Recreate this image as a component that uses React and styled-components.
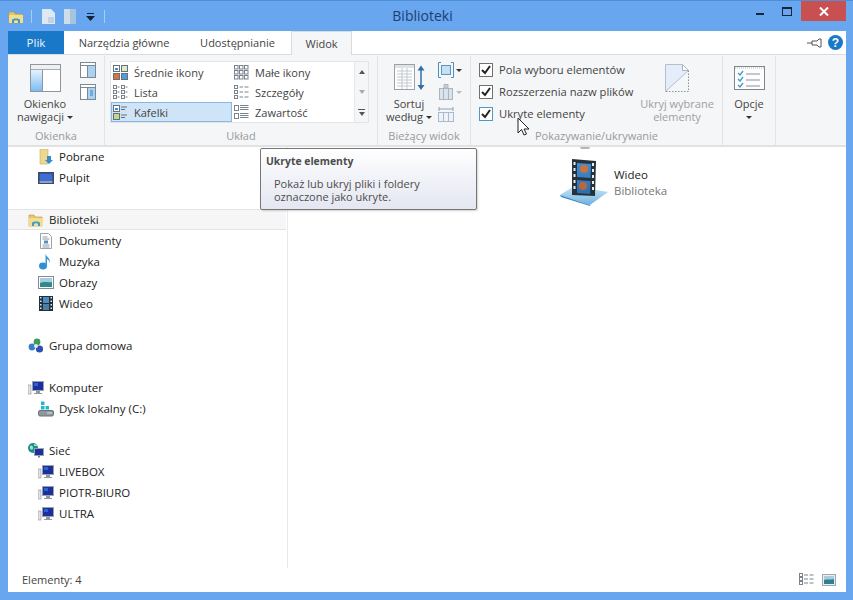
import React from "react";
import styled, { createGlobalStyle } from "styled-components";

const GlobalStyle = createGlobalStyle`
  html, body {
    margin: 0;
    padding: 0;
    background: #68a6ef;
  }
  * {
    box-sizing: border-box;
  }
`;

const Win = styled.div`
  width: 853px;
  height: 600px;
  position: relative;
  overflow: hidden;
  background: #68a6ef;
  border-top: 1px solid #4f8fd8;
  padding: 0 7px 8px 8px;
  display: flex;
  flex-direction: column;
  font-family: "Open Sans", "Noto Sans", sans-serif;
  font-size: 11px;
  color: #333;
`;

const TitleBar = styled.div`
  height: 30px;
  flex: none;
  display: flex;
  align-items: flex-start;
  position: relative;
`;

const QuickBar = styled.div`
  display: flex;
  align-items: center;
  height: 30px;
  padding-top: 1px;
  svg {
    display: block;
  }
`;

const QuickSep = styled.div`
  width: 1px;
  height: 13px;
  background: #a8cdf3;
  margin: 0 ${(p) => p.$r || 10}px 0 ${(p) => p.$l || 7}px;
`;

const QuickIcon = styled.svg`
  margin-left: ${(p) => p.$ml || 0}px;
`;

const Title = styled.div`
  position: absolute;
  left: 0;
  right: 9px;
  top: 5px;
  text-align: center;
  font-size: 14px;
  color: #1c3f6f;
`;

const Controls = styled.div`
  margin-left: auto;
  display: flex;
  align-items: flex-start;
`;

const Ctl = styled.div`
  width: 27px;
  height: 20px;
  display: flex;
  align-items: center;
  justify-content: center;
`;

const Close = styled.div`
  width: 45px;
  height: 20px;
  background: #c85050;
  margin-left: 1px;
  display: flex;
  align-items: center;
  justify-content: center;
`;

const TabBar = styled.div`
  height: 23px;
  flex: none;
  background: #fff;
  display: flex;
  align-items: stretch;
  position: relative;
`;

const FileTab = styled.div`
  width: 56px;
  background: #1a78c9;
  color: #eaf3fb;
  font-size: 11.5px;
  display: flex;
  align-items: center;
  justify-content: center;
`;

const Tab = styled.div`
  width: ${(p) => p.$w}px;
  font-size: 11px;
  color: #444;
  display: flex;
  align-items: center;
  justify-content: center;
  ${(p) =>
    p.$active &&
    `
    background: #f5f6f7;
    border: 1px solid #dadbdc;
    border-bottom: none;
    margin-bottom: -1px;
    z-index: 1;
  `}
`;

const TabRight = styled.div`
  margin-left: auto;
  display: flex;
  align-items: center;
  gap: 5px;
  padding-right: 3px;
`;

const Ribbon = styled.div`
  height: 93px;
  flex: none;
  background: #f5f6f7;
  border-top: 1px solid #dadbdc;
  border-bottom: 2px solid #e1e2e3;
  display: flex;
`;

const Group = styled.div`
  width: ${(p) => p.$w}px;
  flex: none;
  display: flex;
  flex-direction: column;
  border-right: 1px solid #e2e3e4;
  margin-top: 1px;
`;

const GroupBody = styled.div`
  flex: 1;
  display: flex;
  min-height: 0;
`;

const GroupLabel = styled.div`
  height: 16px;
  text-align: center;
  font-size: 11px;
  line-height: 14px;
  color: #9a9a9a;
`;

const BigButton = styled.div`
  width: ${(p) => p.$w}px;
  margin-left: ${(p) => p.$ml || 0}px;
  flex: none;
  display: flex;
  flex-direction: column;
  align-items: center;
  padding-top: ${(p) => p.$pt || 8}px;
  color: ${(p) => (p.$off ? "#a0a0a0" : "#444")};
  font-size: 11px;
  line-height: 13px;
  text-align: center;
  svg {
    display: block;
    flex: none;
  }
`;

const BigText = styled.div`
  position: relative;
  margin-top: ${(p) => p.$mt || 5}px;
  white-space: nowrap;
`;

const Caret = styled.span`
  display: inline-block;
  width: 0;
  height: 0;
  border-left: 3px solid transparent;
  border-right: 3px solid transparent;
  border-top: 3px solid ${(p) => p.$c || "#333"};
  margin-left: ${(p) => p.$ml ?? 3}px;
  vertical-align: 2px;
`;

const SmallStack = styled.div`
  display: flex;
  flex-direction: column;
  gap: 6px;
  margin-left: ${(p) => p.$ml}px;
  padding-top: 6px;
  svg {
    display: block;
  }
`;

const SmallRow = styled.div`
  display: flex;
  align-items: center;
  gap: 2px;
`;

const Gallery = styled.div`
  margin: 5px 0 0 5px;
  width: 259px;
  height: 62px;
  background: #fff;
  border: 1px solid #e2e3e4;
  display: flex;
`;

const GalleryGrid = styled.div`
  display: grid;
  grid-template-columns: 121px 121px;
  grid-auto-flow: column;
  grid-template-rows: repeat(3, 20px);
`;

const GalleryItem = styled.div`
  display: flex;
  align-items: center;
  gap: 6px;
  padding-left: ${(p) => (p.$sel ? "1px" : "2px")};
  font-size: 11px;
  color: #444;
  white-space: nowrap;
  ${(p) =>
    p.$sel &&
    `
    background: #cfe4f7;
    border: 1px solid #86b9e4;
  `}
  svg {
    display: block;
    flex: none;
  }
`;

const GalleryScroll = styled.div`
  margin-left: auto;
  width: 14px;
  border-left: 1px solid #e8e8e8;
  display: grid;
  grid-template-rows: repeat(3, 1fr);
  background: #f5f6f7;
`;

const ScrollCell = styled.div`
  display: flex;
  align-items: center;
  justify-content: center;
  flex-direction: column;
  gap: 2px;
`;

const Arrow = styled.span`
  width: 0;
  height: 0;
  border-left: 3px solid transparent;
  border-right: 3px solid transparent;
  ${(p) =>
    p.$up
      ? `border-bottom: 4px solid ${p.$c || "#555"};`
      : `border-top: 4px solid ${p.$c || "#555"};`}
`;

const ScrollBar = styled.span`
  width: 7px;
  height: 1px;
  background: #555;
`;

const CheckList = styled.div`
  display: flex;
  flex-direction: column;
  gap: 0.5px;
  margin-left: 8px;
  padding-top: 3px;
  width: 158px;
  flex: none;
`;

const CheckRow = styled.div`
  height: 21.5px;
  display: flex;
  align-items: center;
  gap: 6px;
  font-size: 11.2px;
  color: #444;
  white-space: nowrap;
`;

const CheckBox = styled.span`
  width: 14px;
  height: 14px;
  flex: none;
  background: #fff;
  border: 1px solid ${(p) => (p.$hot ? "#4d9ac8" : "#707070")};
  display: flex;
  align-items: center;
  justify-content: center;
`;

const Content = styled.div`
  flex: 1;
  min-height: 0;
  background: #fff;
  display: flex;
  flex-direction: column;
`;

const Panes = styled.div`
  flex: 1;
  min-height: 0;
  display: flex;
`;

const Sidebar = styled.div`
  width: 280px;
  flex: none;
  border-right: 1px solid #e9eaeb;
  overflow: hidden;
`;

const NavList = styled.div`
  margin-top: -1px;
`;

const NavRow = styled.div`
  height: 21px;
  display: flex;
  align-items: center;
  gap: 5px;
  padding-left: ${(p) => (p.$child ? 30 : 20)}px;
  margin-bottom: ${(p) => (p.$last ? 21 : 0)}px;
  font-size: 11.5px;
  color: #222;
  width: 278px;
  ${(p) =>
    p.$hl &&
    `
    background: #f6f6f6;
    box-shadow: inset 0 1px 0 #e4e4e4, inset 0 -1px 0 #e4e4e4;
  `}
`;

const NavIcon = styled.span`
  width: 16px;
  height: 17px;
  flex: none;
  display: flex;
  align-items: center;
  justify-content: center;
  svg {
    display: block;
  }
`;

const Main = styled.div`
  flex: 1;
  position: relative;
  padding: 11px 0 0 272px;
`;

const Tile = styled.div`
  display: flex;
  align-items: flex-start;
  gap: 6px;
  svg {
    display: block;
    flex: none;
  }
`;

const TileText = styled.div`
  padding-top: 9px;
  font-size: 11.5px;
  line-height: 16px;
  color: #222;
  span {
    display: block;
    color: #777;
  }
`;

const ClippedArc = styled.div`
  position: absolute;
  top: 0;
  left: 292px;
  width: 10px;
  height: 2px;
  background: #b5b5b5;
  border-radius: 0 0 5px 5px;
`;

const StatusBar = styled.div`
  height: 24px;
  flex: none;
  display: flex;
  align-items: center;
  padding: 0 10px 1px 14px;
  font-size: 11px;
  color: #444;
`;

const StatusIcons = styled.div`
  margin-left: auto;
  display: flex;
  align-items: center;
  gap: 8px;
  svg {
    display: block;
  }
`;

const Tooltip = styled.div`
  position: absolute;
  left: 260px;
  top: 147px;
  width: 217px;
  height: 62px;
  background: linear-gradient(#ffffff, #e4e6f1);
  border: 1px solid #767676;
  border-radius: 2px;
  box-shadow: 1px 1px 2px rgba(0, 0, 0, 0.18);
  padding: 5px 5px;
  color: #4c4c4c;
  font-size: 11px;
  line-height: 13px;
`;

const TipTitle = styled.div`
  font-weight: 700;
  font-size: 10.4px;
  margin-bottom: 9px;
  margin-top: 1px;
`;

const TipText = styled.div`
  padding-left: 8px;
`;

const Cursor = styled.svg`
  position: absolute;
  left: 517px;
  top: 116px;
`;

const FolderIcon = ({ s = 16 }) => (
  <svg width={s} height={s} viewBox="0 0 16 16">
    <path d="M1 3h5l1 2h7v9H1z" fill="#e8c766" stroke="#b5983f" strokeWidth=".6" />
    <path d="M1 6h14v8H1z" fill="#f4dd8e" />
    <path d="M4 14v-3c0-2 8-2 8 0v3h-2v-2c0-1-4-1-4 0v2z" fill="#3d9fc4" />
  </svg>
);

const DownloadsIcon = () => (
  <svg width="16" height="16" viewBox="0 0 16 16">
    <path d="M2 0h8v15H2z" fill="#ecd88f" stroke="#c6ad58" strokeWidth=".6" />
    <path d="M9 7h4v4h2l-4 4-4-4h2z" fill="#2f8ed0" />
  </svg>
);

const DesktopIcon = () => (
  <svg width="16" height="12" viewBox="0 0 16 12">
    <rect x=".5" y=".5" width="15" height="11" fill="#2c3f6f" stroke="#404a60" />
    <rect x="1.500" y="1.500" width="13" height="8" fill="#3e6fd0" />
    <rect x="1.500" y="9" width="13" height="2" fill="#8aa0c8" />
  </svg>
);

const DocIcon = () => (
  <svg width="16" height="16" viewBox="0 0 16 16">
    <path d="M2.500.5h8l3 3v12h-11z" fill="#fff" stroke="#9aa4ae" />
    <path d="M4.500 4h5M4.500 6h7M4.500 12h7M4.500 14h7" stroke="#8f9aa6" />
    <rect x="6" y="7.500" width="4" height="3" fill="#5d8fb5" />
  </svg>
);

const MusicIcon = () => (
  <svg width="16" height="17" viewBox="0 0 16 17">
    <ellipse cx="5" cy="13" rx="4" ry="3.400" fill="#2d8fd4" />
    <path d="M7.500 13V1c1 3 5 4 4.500 9-.5-2-2-3.500-3-4v7z" fill="#3a9ad9" />
  </svg>
);

const PictureIcon = () => (
  <svg width="16" height="13" viewBox="0 0 16 13">
    <rect x=".5" y=".5" width="15" height="12" fill="#fff" stroke="#7f8b95" />
    <rect x="2" y="2" width="12" height="5" fill="#a8cbe0" />
    <path d="M2 7c4-2 8 0 12-1v5H2z" fill="#2f8a8c" />
  </svg>
);

const FilmIcon = () => (
  <svg width="14" height="15" viewBox="0 0 14 15">
    <rect width="14" height="15" fill="#22303c" />
    <path d="M1 1h1.500v1.500H1zM1 4.500h1.500V6H1zM1 8h1.500v1.500H1zM1 11.500h1.500V13H1zM11.500 1H13v1.500h-1.500zM11.500 4.500H13V6h-1.500zM11.500 8H13v1.500h-1.500zM11.500 11.500H13V13h-1.500z" fill="#dfe7ee" />
    <rect x="4" y="1" width="6" height="6" fill="#4d8cc5" />
    <rect x="4" y="8" width="6" height="6" fill="#4d7fa5" />
  </svg>
);

const HomegroupIcon = () => (
  <svg width="16" height="16" viewBox="0 0 16 16">
    <circle cx="9" cy="4" r="3.400" fill="#3f9c5b" />
    <circle cx="4" cy="9" r="3.400" fill="#3a7dc9" />
    <circle cx="11.500" cy="11" r="3.600" fill="#2e4fae" />
    <circle cx="8" cy="8" r="2" fill="#dfe9f5" />
  </svg>
);

const ComputerIcon = () => (
  <svg width="16" height="14" viewBox="0 0 16 14">
    <rect x="0" y="4" width="3" height="9" fill="#dfe2e6" stroke="#8a9098" strokeWidth=".6" />
    <rect x="4.500" y=".5" width="11" height="9" fill="#1c2f9c" stroke="#9aa3ad" />
    <path d="M6 2h4v3H6z" fill="#2a63d6" />
    <path d="M8 10h4v2h2v1H6v-1h2z" fill="#8f98a3" />
  </svg>
);

const DriveIcon = () => (
  <svg width="16" height="16" viewBox="0 0 16 16">
    <path d="M3 .5h3.500v3.500H3zM3 5h3.500v3.500H3zM7.500 5H11v3.500H7.500z" fill="#22b7cf" />
    <rect x=".5" y="9.500" width="15" height="5.500" rx="1.500" fill="#8e979c" stroke="#6c7478" />
    <path d="M9 12h5" stroke="#dfe5e8" />
  </svg>
);

const NetworkIcon = () => (
  <svg width="16" height="16" viewBox="0 0 16 16">
    <circle cx="5" cy="5" r="5" fill="#1e8f86" />
    <path d="M2 3c2-1 3 0 3 2S2 7 2 5zM6 1c2 0 3 1 3 2H6z" fill="#a7dfd2" />
    <rect x="6.500" y="5.500" width="9" height="7" fill="#1c2f9c" stroke="#9aa3ad" />
    <path d="M10 13h2v1.500h-2z" fill="#77808a" />
  </svg>
);

const PaneIcon = () => (
  <svg width="31" height="28" viewBox="0 0 31 28">
    <defs>
      <linearGradient id="pane" x1="0" y1="0" x2="0" y2="1">
        <stop offset="0" stopColor="#e6f2fc" />
        <stop offset="1" stopColor="#7bbdf2" />
      </linearGradient>
    </defs>
    <rect x=".5" y=".5" width="30" height="27" fill="#fff" stroke="#8f969d" />
    <rect x="1" y="1" width="29" height="4" fill="#eef0f2" />
    <path d="M1 5.500h29" stroke="#a5abb1" />
    <rect x="1" y="6" width="11" height="21" fill="url(#pane)" />
    <path d="M12.500 6v21" stroke="#8f969d" />
  </svg>
);

const SidePaneIcon = ({ lines }) => (
  <svg width="16" height="16" viewBox="0 0 16 16">
    <rect x=".5" y=".5" width="15" height="15" fill="#fff" stroke="#7c8894" />
    <path d="M1 3.500h14M7.500 4v11" stroke="#7c8894" />
    <rect x="8" y="4" width="7" height="11" fill="#a9d2f3" />
    {lines && <path d="M10 7h3M10 9h3M10 11h3" stroke="#3f83bf" />}
  </svg>
);

const ViewIcon = ({ kind }) => {
  if (kind === "medium")
    return (
      <svg width="15" height="15" viewBox="0 0 15 15">
        <rect x=".5" y=".5" width="6" height="6" fill="#fff" stroke="#66707a" />
        <rect x="2" y="3" width="3" height="2" fill="#3d8fc4" />
        <rect x="8.500" y=".5" width="6" height="6" fill="#dfe9c8" stroke="#66707a" />
        <rect x=".5" y="8.500" width="6" height="6" fill="#d8743c" stroke="#66707a" />
        <rect x="8.500" y="8.500" width="6" height="6" fill="#4d9fd9" stroke="#66707a" />
      </svg>
    );
  if (kind === "tiles")
    return (
      <svg width="15" height="15" viewBox="0 0 15 15">
        <rect x=".5" y=".5" width="6" height="6" fill="#fff" stroke="#66707a" />
        <rect x="2" y="3" width="3" height="2" fill="#3d8fc4" />
        <rect x=".5" y="8.500" width="6" height="6" fill="#c5d58a" stroke="#66707a" />
        <path d="M8 2h6M8 4.500h4M8 10h6M8 12.500h4" stroke="#66707a" />
      </svg>
    );
  if (kind === "small") {
    const c = [];
    for (let y = 0; y < 3; y++)
      for (let x = 0; x < 3; x++)
        c.push(<rect key={`${x}${y}`} x={x * 5 + 0.5} y={y * 5 + 0.5} width="3.500" height="3.500" fill="#fff" stroke="#7a838c" />);
    return (
      <svg width="15" height="15" viewBox="0 0 15 15">
        {c}
      </svg>
    );
  }
  if (kind === "list")
    return (
      <svg width="15" height="15" viewBox="0 0 15 15">
        {[0.5, 5.5, 10.5].map((y) => (
          <g key={y}>
            <rect x=".5" y={y} width="3" height="3" fill="#fff" stroke="#7a838c" />
            <path d={`M4.500 ${y + 1.5}h2`} stroke="#7a838c" />
            <rect x="8.500" y={y} width="3" height="3" fill="#fff" stroke="#7a838c" />
            <path d={`M12.500 ${y + 1.5}h2`} stroke="#7a838c" />
          </g>
        ))}
      </svg>
    );
  if (kind === "details")
    return (
      <svg width="15" height="15" viewBox="0 0 15 15">
        {[0.5, 5.5, 10.5].map((y) => (
          <g key={y}>
            <rect x=".5" y={y} width="3" height="3" fill="#fff" stroke="#7a838c" />
            <path d={`M5.500 ${y + 1.5}h3.500M10.500 ${y + 1.5}h4`} stroke="#7a838c" />
          </g>
        ))}
      </svg>
    );
  return (
    <svg width="15" height="15" viewBox="0 0 15 15">
      {[0.5, 8.5].map((y) => (
        <g key={y}>
          <rect x=".5" y={y} width="4" height="5" fill="#fff" stroke="#7a838c" />
          <path d={`M6 ${y}h8.500M6 ${y + 2}h8.500M6 ${y + 4}h8.500`} stroke="#7a838c" />
        </g>
      ))}
    </svg>
  );
};

const SortIcon = () => (
  <svg width="31" height="27" viewBox="0 0 31 27">
    <rect x=".5" y=".5" width="20" height="25" fill="#fff" stroke="#9aa0a6" />
    <rect x="1" y="1" width="19" height="3" fill="#dfe3e7" />
    <path d="M3 7h15M3 10h15M3 13h15M3 16h15M3 19h15M3 22h15M8 4v21M13 4v21" stroke="#c3c8cd" />
    <path d="M27 3v21" stroke="#2f6fa8" strokeWidth="1.500" />
    <path d="M23.500 6.500 27 1.500l3.500 5zM23.500 21 27 26l3.500-5z" fill="#2f6fa8" />
  </svg>
);

const ColumnIcon = ({ kind }) => {
  if (kind === "add")
    return (
      <svg width="16" height="16" viewBox="0 0 16 16">
        <path d="M3 .5H.5v15H3M13 .5h2.500v15H13" fill="none" stroke="#4f8cc0" />
        <rect x="3.500" y="3.500" width="9" height="9" fill="#c4e0f5" stroke="#5f94bf" />
      </svg>
    );
  if (kind === "fit")
    return (
      <svg width="16" height="16" viewBox="0 0 16 16">
        <rect x=".5" y="6.500" width="15" height="9" fill="#eef2f6" stroke="#a8bacb" />
        <path d="M5.500 7v8M10.500 7v8" stroke="#a8bacb" />
        <path d="M1 3h14M1 1v4M15 1v4" stroke="#8da2b5" />
      </svg>
    );
  return (
    <svg width="16" height="16" viewBox="0 0 16 16">
      <rect x="1.500" y="4.500" width="13" height="11" fill="#dbe3ea" stroke="#a9b5c0" />
      <path d="M5.500 5v10M10.500 5v10" stroke="#a9b5c0" />
      <path d="M6 4V.5h4V4z" fill="#c9d2da" stroke="#a9b5c0" />
    </svg>
  );
};

const HideIcon = () => (
  <svg width="24" height="28" viewBox="0 0 24 28">
    <path d="M.5.500h17l6 6v21H.5z" fill="#e4edf9" />
    <path d="M23.500 6.500v21H.5z" fill="#f5f6f7" />
    <path d="M17.500.5l6 6h-6z" fill="#fff" stroke="#aab3bd" />
    <path d="M.5 27.500V.5h17" fill="none" stroke="#b5bec9" />
    <path d="M.5 27.500 23.500 6.500" stroke="#b5bec9" />
    <path d="M23.500 6.500v21H.5" fill="none" stroke="#8d949b" strokeDasharray="1.500 1.500" />
  </svg>
);

const OptionsIcon = () => (
  <svg width="31" height="24" viewBox="0 0 31 24">
    <rect x=".5" y=".5" width="30" height="23" fill="#fdfdfd" stroke="#7f868d" />
    <path d="M1 2h29" stroke="#b9bec3" strokeDasharray="1 1" />
    <path d="M4 7l2 2 3-4M4 13l2 2 3-4M4 19l2 2 3-4" fill="none" stroke="#3d9bc9" strokeWidth="1.300" />
    <path d="M12 8h14M12 14h14M12 20h14" stroke="#8b9299" />
  </svg>
);

const Check = () => (
  <svg width="10" height="10" viewBox="0 0 10 10">
    <path d="M1 5l3 3 5-7" fill="none" stroke="#222" strokeWidth="2" />
  </svg>
);

const TileIcon = () => (
  <svg width="48" height="48" viewBox="0 0 48 48">
    <defs>
      <linearGradient id="base" x1="0" y1="0" x2="0" y2="1">
        <stop offset="0" stopColor="#cfe7f7" />
        <stop offset="1" stopColor="#6db2e0" />
      </linearGradient>
      <linearGradient id="pic" x1="0" y1="0" x2="0" y2="1">
        <stop offset="0" stopColor="#3f8fd6" />
        <stop offset="1" stopColor="#2b6db0" />
      </linearGradient>
    </defs>
    <path d="M0 37 14 28l34 6-18 13z" fill="url(#base)" />
    <path d="M0 37l30 10v1L1 39z" fill="#3d8cc5" />
    <path d="M12 1 36 3 35 38 12 37z" fill="#27313a" />
    <path d="M17 5 31 6 30.500 20 17 19zM17 22l13.500 1-.5 13-13-1z" fill="url(#pic)" />
    <circle cx="24" cy="11" r="4" fill="#d0703a" />
    <circle cx="23" cy="28" r="4" fill="#b9683c" />
    <path d="M13.500 4h2v3h-2zM13.500 10h2v3h-2zM13.500 16h2v3h-2zM13.500 22h2v3h-2zM13.500 28h2v3h-2zM32 5h2v3h-2zM32 11h2v3h-2zM32 17h2v3h-2zM32 23h2v3h-2zM32 29h2v3h-2z" fill="#e8edf0" />
  </svg>
);

const galleryItems = [
  { kind: "medium", label: "Średnie ikony" },
  { kind: "list", label: "Lista" },
  { kind: "tiles", label: "Kafelki", sel: true },
  { kind: "small", label: "Małe ikony" },
  { kind: "details", label: "Szczegóły" },
  { kind: "content", label: "Zawartość" },
];

const navItems = [
  { icon: <DownloadsIcon />, label: "Pobrane", child: true },
  { icon: <DesktopIcon />, label: "Pulpit", child: true, last: true },
  { icon: <FolderIcon />, label: "Biblioteki", hl: true },
  { icon: <DocIcon />, label: "Dokumenty", child: true },
  { icon: <MusicIcon />, label: "Muzyka", child: true },
  { icon: <PictureIcon />, label: "Obrazy", child: true },
  { icon: <FilmIcon />, label: "Wideo", child: true, last: true },
  { icon: <HomegroupIcon />, label: "Grupa domowa", last: true },
  { icon: <ComputerIcon />, label: "Komputer" },
  { icon: <DriveIcon />, label: "Dysk lokalny (C:)", child: true, last: true },
  { icon: <NetworkIcon />, label: "Sieć" },
  { icon: <ComputerIcon />, label: "LIVEBOX", child: true },
  { icon: <ComputerIcon />, label: "PIOTR-BIURO", child: true },
  { icon: <ComputerIcon />, label: "ULTRA", child: true },
];

export default function App() {
  return (
    <>
      <GlobalStyle />
      <Win>
        <TitleBar>
          <QuickBar>
            <FolderIcon />
            <QuickSep />
            <QuickIcon width="13" height="15" viewBox="0 0 13 15">
              <path d="M0 0h9l4 4v11H0z" fill="#dfe9f4" />
              <path d="M6 8h6v6H6z" fill="#c2d2e2" />
            </QuickIcon>
            <QuickIcon $ml={9} width="13" height="15" viewBox="0 0 13 15">
              <path d="M0 0h6v15H0z" fill="#cfdcea" />
              <path d="M6 0h6v15H6z" fill="#a9c3de" />
            </QuickIcon>
            <QuickIcon $ml={9} width="9" height="8" viewBox="0 0 9 8">
              <path d="M1 0h7v1H1zM0 3h9L4.500 8z" fill="#15233b" />
            </QuickIcon>
            <QuickSep $l={9} />
          </QuickBar>
          <Title>Biblioteki</Title>
          <Controls>
            <Ctl>
              <svg width="10" height="10" viewBox="0 0 10 10">
                <rect x="1" y="7" width="8" height="2" fill="#15233b" />
              </svg>
            </Ctl>
            <Ctl>
              <svg width="10" height="9" viewBox="0 0 10 9">
                <rect x=".5" y=".5" width="9" height="8" fill="none" stroke="#15233b" />
                <rect x="0" y="0" width="10" height="2" fill="#15233b" />
              </svg>
            </Ctl>
            <Close>
              <svg width="10" height="9" viewBox="0 0 10 9">
                <path d="M1 .5l8 8M9 .5l-8 8" stroke="#fff" strokeWidth="2" />
              </svg>
            </Close>
          </Controls>
        </TitleBar>

        <TabBar>
          <FileTab>Plik</FileTab>
          <Tab $w={120}>Narzędzia główne</Tab>
          <Tab $w={107}>Udostępnianie</Tab>
          <Tab $w={61} $active>
            Widok
          </Tab>
          <TabRight>
            <svg width="16" height="10" viewBox="0 0 16 10">
              <path d="M0 5h5M5 3h5l2-2h2v8h-2l-2-2H5z" fill="#fff" stroke="#555" />
            </svg>
            <svg width="15" height="15" viewBox="0 0 15 15">
              <circle cx="7.500" cy="7.500" r="7.500" fill="#1a78c9" />
              <text x="7.500" y="12" textAnchor="middle" fontSize="12" fontWeight="700" fill="#fff" fontFamily="Liberation Sans, sans-serif">
                ?
              </text>
            </svg>
          </TabRight>
        </TabBar>

        <Ribbon>
          <Group $w={97}>
            <GroupBody>
              <BigButton $w={60} $ml={7}>
                <PaneIcon />
                <BigText>
                  Okienko
                  <br />
                  nawigacji
                  <Caret />
                </BigText>
              </BigButton>
              <SmallStack $ml={5}>
                <SidePaneIcon />
                <SidePaneIcon lines />
              </SmallStack>
            </GroupBody>
            <GroupLabel>Okienka</GroupLabel>
          </Group>

          <Group $w={273}>
            <GroupBody>
              <Gallery>
                <GalleryGrid>
                  {galleryItems.map((it) => (
                    <GalleryItem key={it.label} $sel={it.sel}>
                      <ViewIcon kind={it.kind} />
                      {it.label}
                    </GalleryItem>
                  ))}
                </GalleryGrid>
                <GalleryScroll>
                  <ScrollCell>
                    <Arrow $up />
                  </ScrollCell>
                  <ScrollCell>
                    <Arrow $c="#aaa" />
                  </ScrollCell>
                  <ScrollCell>
                    <ScrollBar />
                    <Arrow />
                  </ScrollCell>
                </GalleryScroll>
              </Gallery>
            </GroupBody>
            <GroupLabel>Układ</GroupLabel>
          </Group>

          <Group $w={93}>
            <GroupBody>
              <BigButton $w={50} $ml={6}>
                <SortIcon />
                <BigText $mt={6}>
                  Sortuj
                  <br />
                  według
                  <Caret />
                </BigText>
              </BigButton>
              <SmallStack $ml={4}>
                <SmallRow>
                  <ColumnIcon kind="add" />
                  <Caret $ml={0} />
                </SmallRow>
                <SmallRow>
                  <ColumnIcon />
                  <Caret $ml={0} $c="#bbb" />
                </SmallRow>
                <SmallRow>
                  <ColumnIcon kind="fit" />
                </SmallRow>
              </SmallStack>
            </GroupBody>
            <GroupLabel>Bieżący widok</GroupLabel>
          </Group>

          <Group $w={252}>
            <GroupBody>
              <CheckList>
                <CheckRow>
                  <CheckBox>
                    <Check />
                  </CheckBox>
                  Pola wyboru elementów
                </CheckRow>
                <CheckRow>
                  <CheckBox>
                    <Check />
                  </CheckBox>
                  Rozszerzenia nazw plików
                </CheckRow>
                <CheckRow>
                  <CheckBox $hot>
                    <Check />
                  </CheckBox>
                  Ukryte elementy
                </CheckRow>
              </CheckList>
              <BigButton $w={80} $off>
                <HideIcon />
                <BigText>
                  Ukryj wybrane
                  <br />
                  elementy
                </BigText>
              </BigButton>
            </GroupBody>
            <GroupLabel>Pokazywanie/ukrywanie</GroupLabel>
          </Group>

          <Group $w={53}>
            <GroupBody>
              <BigButton $w={52} $pt={10}>
                <OptionsIcon />
                <BigText $mt={7}>
                  Opcje
                  <br />
                  <Caret $ml={0} />
                </BigText>
              </BigButton>
            </GroupBody>
          </Group>
        </Ribbon>

        <Content>
          <Panes>
            <Sidebar>
              <NavList>
                {navItems.map((it) => (
                  <NavRow key={it.label} $child={it.child} $last={it.last} $hl={it.hl}>
                    <NavIcon>{it.icon}</NavIcon>
                    {it.label}
                  </NavRow>
                ))}
              </NavList>
            </Sidebar>
            <Main>
              <ClippedArc />
              <Tile>
                <TileIcon />
                <TileText>
                  Wideo
                  <span>Biblioteka</span>
                </TileText>
              </Tile>
            </Main>
          </Panes>
          <StatusBar>
            Elementy: 4
            <StatusIcons>
              <svg width="15" height="13" viewBox="0 0 15 13">
                {[0.5, 4.5, 8.5].map((y) => (
                  <g key={y}>
                    <rect x=".5" y={y} width="3" height="3" fill="#fff" stroke="#7a838c" />
                    <path d={`M5 ${y + 1.5}h4M10.500 ${y + 1.5}h4`} stroke="#7a838c" />
                  </g>
                ))}
              </svg>
              <svg width="14" height="12" viewBox="0 0 14 12">
                <rect x=".5" y=".5" width="13" height="11" fill="#e8eef3" stroke="#9aa6b0" />
                <rect x="2" y="2" width="10" height="4" fill="#a8cbe0" />
                <path d="M2 6c3-1 7 0 10-1v5H2z" fill="#2f7f8c" />
              </svg>
            </StatusIcons>
          </StatusBar>
        </Content>

        <Tooltip>
          <TipTitle>Ukryte elementy</TipTitle>
          <TipText>
            Pokaż lub ukryj pliki i foldery
            <br />
            oznaczone jako ukryte.
          </TipText>
        </Tooltip>

        <Cursor width="14" height="20" viewBox="0 0 14 20">
          <path d="M1 1v15l3.500-3.500L7 18l2.500-1-2.500-5h5z" fill="#fff" stroke="#222" strokeWidth="1" />
        </Cursor>
      </Win>
    </>
  );
}
